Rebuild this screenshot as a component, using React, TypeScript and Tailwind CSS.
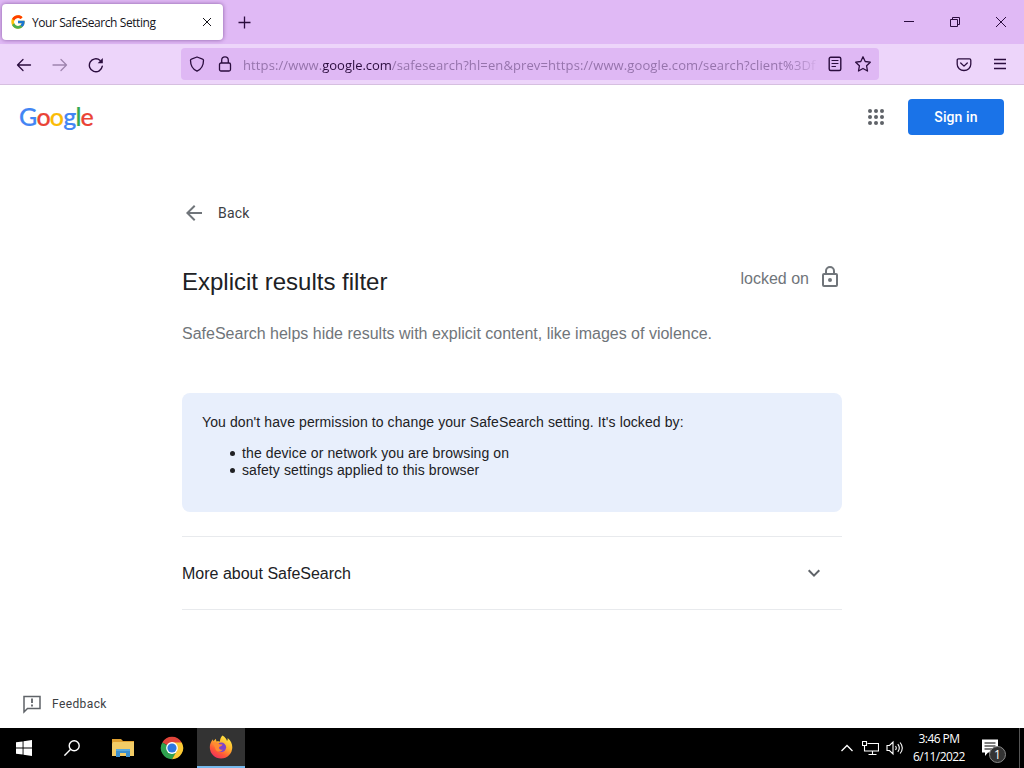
import { FcGoogle } from 'react-icons/fc'

function TabBar() {
  return (
    <div className="flex h-11 items-start bg-[#e0b9f5] text-[#2b0d3e]">
      <div className="ml-0.5 mt-1 flex h-9 w-[221px] items-center rounded bg-white shadow-[0_0_4px_rgba(80,30,110,0.6)]">
        <FcGoogle className="ml-2 h-4 w-4" />
        <span className="ml-1.5 w-[163px] whitespace-nowrap pt-0.5 font-['Open_Sans',sans-serif] text-[12px] tracking-[-0.42px] text-[#15141a]">
          Your SafeSearch Setting
        </span>
        <svg className="ml-1 h-4 w-4" viewBox="0 0 16 16" stroke="#15141a" strokeWidth="1">
          <path d="M4 4l8 8M12 4l-8 8" />
        </svg>
      </div>
      <svg className="ml-3.5 mt-3.5 h-4 w-4" viewBox="0 0 16 16" stroke="currentColor" strokeWidth="1.3">
        <path d="M7.500 2.500v12M1.500 8.500h12" />
      </svg>
      <div className="ml-auto flex h-11 items-center">
        <svg className="h-4 w-[46px]" viewBox="0 0 46 16" stroke="currentColor">
          <path d="M18 7.500h10" />
        </svg>
        <svg className="h-4 w-[46px]" viewBox="0 0 46 16" fill="none" stroke="currentColor">
          <path d="M18.500 5.500h7v7h-7zM20.500 5v-1.500h7v7h-1.500" />
        </svg>
        <svg className="h-4 w-[46px]" viewBox="0 0 46 16" stroke="currentColor" strokeWidth="1">
          <path d="M18 3l10 10M28 3l-10 10" />
        </svg>
      </div>
    </div>
  )
}

function Toolbar() {
  return (
    <div className="flex h-[41px] items-center border-b border-[#d6bfe0] bg-[#edd5fa] text-[#2b0d3e]">
      <svg className="ml-4 mt-px h-4 w-4" viewBox="0 0 16 16" fill="none" stroke="currentColor" strokeWidth="1.3" strokeLinecap="round" strokeLinejoin="round">
        <path d="M14.500 8H1.500M7 2.500L1.500 8 7 13.500" />
      </svg>
      <svg className="ml-5 mt-px h-4 w-4 opacity-40" viewBox="0 0 16 16" fill="none" stroke="currentColor" strokeWidth="1.3" strokeLinecap="round" strokeLinejoin="round">
        <path d="M1 8h13.500M9 2.500L14.500 8 9 13.500" />
      </svg>
      <svg className="ml-5 mt-px h-4 w-4" viewBox="0 0 16 16" fill="none" stroke="currentColor" strokeWidth="1.400" strokeLinecap="round">
        <path d="M14.300 9.200A6.500 6.500 0 1 1 12.200 3.400" />
        <path d="M14.800 1v5.200H9.700z" fill="currentColor" stroke="none" />
      </svg>
      <div className="ml-[77px] flex h-8 w-[698px] items-center rounded bg-[#dfb8f4]">
        <svg className="ml-2 h-4 w-4" viewBox="0 0 16 16" fill="none" stroke="currentColor" strokeWidth="1.300" strokeLinejoin="round">
          <path d="M8 1l5.600 2.100q.9.300.9 1.200C14.500 9 12.500 13.200 8 15.200 3.500 13.200 1.500 9 1.500 4.300q0-.9.900-1.200z" />
        </svg>
        <svg className="ml-3 h-4 w-4" viewBox="0 0 16 16" fill="none" stroke="currentColor" strokeWidth="1.300">
          <rect x="2.500" y="7" width="11" height="8" rx="1.500" />
          <path d="M4.700 7V4.200a3.300 3.300 0 0 1 6.600 0V7" />
        </svg>
        <div className="ml-2.5 w-[574px] whitespace-nowrap pt-0.5 font-['Open_Sans',sans-serif] text-[13px] leading-6 tracking-[0.11px] text-[#9674ac] [mask-image:linear-gradient(to_right,black_545px,transparent_578px)]">
          https://www.<span className="tracking-[-0.03px] text-[#2b0d3e]">google.com</span>/safesearch?hl=en&amp;prev=https://www.google.com/search?client%3Df
        </div>
        <svg className="ml-2.5 h-4 w-4" viewBox="0 0 16 16" fill="none" stroke="currentColor" strokeWidth="1.400" strokeLinecap="round">
          <rect x="2.200" y="1.200" width="11.600" height="13.300" rx="1.500" />
          <path d="M5 4.500h6M5 7.500h6M5 10.500h3.500" strokeWidth="1.200" />
        </svg>
        <svg className="ml-3 h-4 w-4" viewBox="0 0 16 16" fill="none" stroke="currentColor" strokeWidth="1.300" strokeLinejoin="round">
          <path d="M8 .8l2.200 4.700 5.100.7-3.700 3.600.9 5.200L8 12.500 3.500 15l.9-5.200L.7 6.200l5.100-.7z" />
        </svg>
      </div>
      <svg className="ml-[77px] mt-px h-4 w-4" viewBox="0 0 16 16" fill="none" stroke="currentColor" strokeWidth="1.300" strokeLinecap="round" strokeLinejoin="round">
        <path d="M2.500 1.900h11q1.300 0 1.300 1.300v4a6.800 6.300 0 0 1-13.600 0v-4q0-1.300 1.300-1.300zM4.700 6L8 9.100 11.300 6" />
      </svg>
      <svg className="ml-5 h-4 w-4" viewBox="0 0 16 16" stroke="currentColor" strokeWidth="1.300">
        <path d="M2 3.500h12M2 7.500h12M2 12.500h12" />
      </svg>
    </div>
  )
}

function GoogleWordmark() {
  return (
    <div className="flex h-9 items-center pb-0.5 font-[Lato,sans-serif] text-[25px] font-medium leading-9 tracking-[-0.85px] [-webkit-text-stroke:0.2px]">
      <span className="text-[#4285f4]">G</span>
      <span className="text-[#ea4335]">o</span>
      <span className="text-[#fbbc05]">o</span>
      <span className="text-[#4285f4]">g</span>
      <span className="text-[#34a853]">l</span>
      <span className="text-[#ea4335]">e</span>
    </div>
  )
}

function SafeSearchPage() {
  return (
    <div className="flex h-[643px] flex-col bg-white font-['Liberation_Sans',Arial,sans-serif]">
      <header className="flex items-center pl-[19px] pr-5 pt-3.5">
        <GoogleWordmark />
        <svg className="ml-auto h-6 w-6" viewBox="0 0 24 24" fill="#5f6368">
          {[6, 12, 18].map((y) => [6, 12, 18].map((x) => <circle key={`${x}-${y}`} cx={x} cy={y} r="2" />))}
        </svg>
        <button className="ml-5 h-9 w-24 rounded bg-[#1a73e8] font-[Roboto,sans-serif] text-sm font-medium tracking-[0.1px] text-white">
          Sign in
        </button>
      </header>

      <main className="ml-[182px] w-[660px]">
        <div className="mt-[66px] flex h-6 items-center">
          <svg className="h-6 w-6" viewBox="0 0 24 24" fill="#70757a">
            <path d="M20 11H7.830l5.590-5.590L12 4l-8 8 8 8 1.410-1.410L7.830 13H20v-2z" />
          </svg>
          <span className="ml-3 font-[Roboto,sans-serif] text-sm tracking-[0.2px] text-[#3c4043]">Back</span>
        </div>

        <div className="mt-9 flex h-9 items-center">
          <h1 className="pt-1.5 text-2xl text-[#202124]">Explicit results filter</h1>
          <span className="ml-auto text-base text-[#70757a]">locked on</span>
          <svg className="mb-1 ml-[9px] h-6 w-6" viewBox="0 0 24 24" fill="#70757a">
            <path d="M18 8h-1V6A5 5 0 0 0 7 6v2H6a2 2 0 0 0-2 2v10a2 2 0 0 0 2 2h12a2 2 0 0 0 2-2V10a2 2 0 0 0-2-2zM9 6a3 3 0 0 1 6 0v2H9zm9 14H6V10h12zm-6-3a2 2 0 1 0 0-4 2 2 0 0 0 0 4z" />
          </svg>
        </div>
        <p className="mt-[25px] text-base text-[#70757a]">
          SafeSearch helps hide results with explicit content, like images of violence.
        </p>

        <div className="mt-[47px] h-[119px] rounded-lg bg-[#e8effc] px-5 pt-[21px] text-sm leading-[17px] text-[#202124]">
          <p className="tracking-[0.1px]">You don't have permission to change your SafeSearch setting. It's locked by:</p>
          <ul className="mt-3.5 pl-10 tracking-[0.1px]">
            <li className="relative before:absolute before:-left-3 before:top-1.5 before:h-[5px] before:w-[5px] before:rounded-full before:bg-[#202124]">
              the device or network you are browsing on
            </li>
            <li className="relative before:absolute before:-left-3 before:top-1.5 before:h-[5px] before:w-[5px] before:rounded-full before:bg-[#202124]">
              safety settings applied to this browser
            </li>
          </ul>
        </div>

        <div className="mt-6 flex h-[74px] items-center justify-between border-y border-[#e8eaed] pr-4">
          <span className="pt-0.5 text-base text-[#202124]">More about SafeSearch</span>
          <svg className="h-6 w-6" viewBox="0 0 24 24" fill="none" stroke="#5f6368" strokeWidth="2">
            <path d="M6.700 9.300L12 14.600l5.300-5.300" />
          </svg>
        </div>
      </main>

      <footer className="mb-3.5 ml-[22px] mt-auto flex items-center">
        <svg className="h-5 w-5" viewBox="0 0 20 20" fill="none" stroke="#5f6368" strokeWidth="1.500">
          <path d="M2 18V2.500h16v12H5.500z" />
          <path d="M10 4.500v4.500M10 10.500v2" strokeWidth="1.800" />
        </svg>
        <span className="ml-2.5 font-[Roboto,sans-serif] text-xs tracking-[0.4px] text-[#3c4043]">Feedback</span>
      </footer>
    </div>
  )
}

function ChromeIcon() {
  return (
    <svg className="h-6 w-6" viewBox="0 0 24 24">
      <path d="M12 12L2.300 6.400A11.200 11.200 0 0 1 21.700 6.400z" fill="#e0443a" />
      <path d="M12 12L2.300 6.400A11.200 11.200 0 0 0 12 23.200l5-8z" fill="#2fa24f" />
      <path d="M12 6.400h9.700A11.200 11.200 0 0 1 12 23.200l4.900-8.400z" fill="#fcc934" />
      <circle cx="12" cy="12" r="5.900" fill="#fff" />
      <circle cx="12" cy="12" r="4.600" fill="#2d78e0" />
    </svg>
  )
}

function FirefoxIcon() {
  return (
    <svg className="h-6 w-6" viewBox="0 0 24 24">
      <defs>
        <linearGradient id="fox" x1="0.8" y1="0" x2="0.2" y2="1">
          <stop offset="0" stopColor="#fff044" />
          <stop offset="0.4" stopColor="#ffb02e" />
          <stop offset="0.7" stopColor="#ff5a36" />
          <stop offset="1" stopColor="#ec2865" />
        </linearGradient>
      </defs>
      <path d="M13.500.5c2.800 1.500 4 3.700 4.500 5.500.8-.8.800-2 .6-3 3.200 2.300 4.700 5.700 4.700 9.300A11.200 11.200 0 0 1 12 23.500 11.200 11.200 0 0 1 .8 12.300C.8 9.400 2 6.300 4 4.300l.3 2 2.600-2.600.5 2.800c1.200-.4 2.400-.3 3.500.2C11 4.200 11.800 2 13.500.5z" fill="url(#fox)" />
      <circle cx="12.300" cy="12.300" r="4.800" fill="#8044c9" />
      <path d="M3.500 8c2.500-1.500 5-.9 7 1.300l3 .2c-.4 1.700-2 1.800-3.300 2.500-.8 2 1.300 3.300 3.600 2.500-2 3.400-7.500 2.600-7.800-2.100z" fill="#ff8b32" />
    </svg>
  )
}

function Taskbar() {
  return (
    <div className="flex h-10 items-center bg-black font-['Open_Sans',sans-serif] text-white">
      <div className="flex w-12 justify-center">
        <svg className="h-4 w-4" viewBox="0 0 16 16" fill="white">
          <path d="M0 2.300l6.600-.9v6.100H0zM7.500 1.300L16 0v7.500H7.500zM0 8.400h6.600v6.200L0 13.700zM7.500 8.400H16V16l-8.500-1.300z" />
        </svg>
      </div>
      <div className="flex w-12 justify-center">
        <svg className="h-4 w-4" viewBox="0 0 16 16" fill="none" stroke="white" strokeWidth="1.400">
          <circle cx="10.200" cy="5.700" r="5" />
          <path d="M6.700 9.300L.4 15.600" />
        </svg>
      </div>
      <div className="flex w-[52px] justify-center pl-0.5">
        <svg className="h-5 w-[22px]" viewBox="0 0 22 20">
          <path d="M0 1h9l2 2h11v15H0z" fill="#e0a030" />
          <path d="M1 4h21v14H0V6z" fill="#f3cc66" />
          <path d="M4 19v-8h14v8h-4v-4H8v4z" fill="#3c8fcd" />
          <path d="M4 11h14v2H4z" fill="#59a9dd" />
        </svg>
      </div>
      <div className="mr-px flex w-12 justify-center">
        <ChromeIcon />
      </div>
      <div className="flex h-10 w-12 items-center justify-center border-b-2 border-[#76b9ed] bg-[#333333]">
        <FirefoxIcon />
      </div>
      <svg className="ml-auto h-4 w-4" viewBox="0 0 16 16" fill="none" stroke="white" strokeWidth="1.300">
        <path d="M2.500 11L8 5.500l5.500 5.500" />
      </svg>
      <svg className="ml-[7px] mr-px h-4 w-[17px]" viewBox="0 0 17 16" fill="none" stroke="white" strokeWidth="1.100">
        <path d="M5.500 3.500h11v7.500h-11M10.500 11v3M6.500 14.500h8M.5 1.500h4v4h-4zM2.500 5.500v5.500h3" />
      </svg>
      <svg className="ml-1.5 h-4 w-[18px]" viewBox="0 0 18 16" fill="none" stroke="white" strokeWidth="1.100">
        <path d="M1 5.500h2.500L7 2v12l-3.500-3.500H1zM9.500 6q1.500 2 0 4M11.800 4.200q3 3.800 0 7.600M14.100 2.500q4.400 5.500 0 11" />
      </svg>
      <div className="ml-2 w-[54px] whitespace-nowrap text-center text-xs leading-[18px] tracking-[-0.55px]">
        <div>3:46 PM</div>
        <div>6/11/2022</div>
      </div>
      <div className="relative ml-4 mr-px h-6 w-6">
        <svg className="h-6 w-6" viewBox="0 0 24 24">
          <path d="M0 3.500h16v13H6L3 20v-3.500H0z" fill="white" />
          <path d="M2.500 7h11M2.500 10h11M2.500 13h8" stroke="black" strokeWidth="1.200" />
        </svg>
        <span className="absolute left-[7px] top-[10px] flex h-[17px] w-[17px] items-center justify-center rounded-full border border-[#888888] bg-[#333333] text-xs">
          1
        </span>
      </div>
      <div className="ml-3 mr-1 h-10 w-px bg-[#555555]" />
    </div>
  )
}

export default function App() {
  return (
    <div className="h-[768px] w-[1024px] overflow-hidden">
      <TabBar />
      <Toolbar />
      <SafeSearchPage />
      <Taskbar />
    </div>
  )
}
